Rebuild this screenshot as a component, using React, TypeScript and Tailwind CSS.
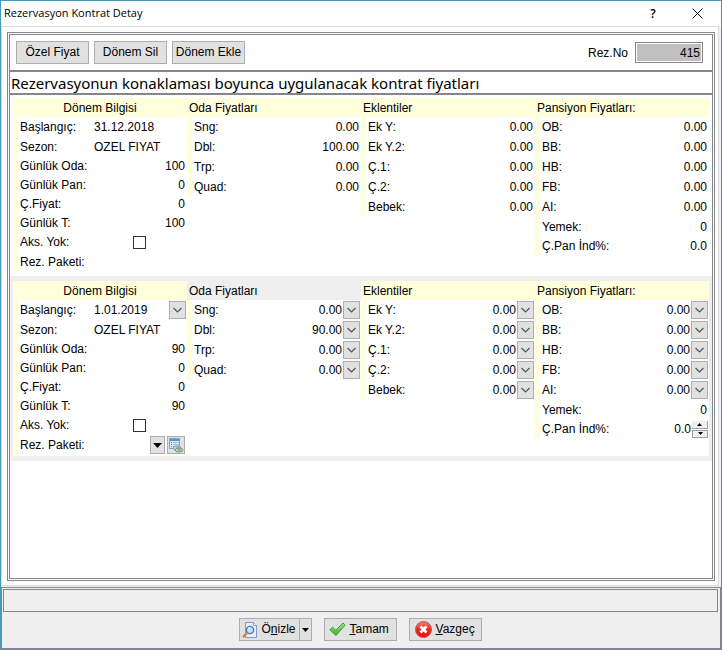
import React, { useId } from 'react';
import clsx from 'clsx';

type Control = 'drop' | 'spin';

interface PriceRow {
  label: string;
  value: string;
  control?: Control;
  short?: boolean;
}

interface Period {
  start: string;
  season: string;
  dailyRoom: string;
  dailyBoard: string;
  childPrice: string;
  dailyTotal: string;
  rooms: PriceRow[];
  extras: PriceRow[];
  boards: PriceRow[];
  active: boolean;
}

const rows = (labels: string[], value: string, control?: Control): PriceRow[] =>
  labels.map((label) => ({ label, value, control }));

const EXTRAS = ['Ek Y:', 'Ek Y.2:', 'Ç.1:', 'Ç.2:', 'Bebek:'];
const BOARDS = ['OB:', 'BB:', 'HB:', 'FB:', 'AI:'];

const periods: Period[] = [
  {
    start: '31.12.2018',
    season: 'OZEL FIYAT',
    dailyRoom: '100',
    dailyBoard: '0',
    childPrice: '0',
    dailyTotal: '100',
    rooms: [
      { label: 'Sng:', value: '0.00' },
      { label: 'Dbl:', value: '100.00' },
      { label: 'Trp:', value: '0.00' },
      { label: 'Quad:', value: '0.00' },
    ],
    extras: rows(EXTRAS, '0.00'),
    boards: [
      ...rows(BOARDS, '0.00'),
      { label: 'Yemek:', value: '0' },
      { label: 'Ç.Pan İnd%:', value: '0.0', short: true },
    ],
    active: false,
  },
  {
    start: '1.01.2019',
    season: 'OZEL FIYAT',
    dailyRoom: '90',
    dailyBoard: '0',
    childPrice: '0',
    dailyTotal: '90',
    rooms: [
      { label: 'Sng:', value: '0.00', control: 'drop' },
      { label: 'Dbl:', value: '90.00', control: 'drop' },
      { label: 'Trp:', value: '0.00', control: 'drop' },
      { label: 'Quad:', value: '0.00', control: 'drop' },
    ],
    extras: rows(EXTRAS, '0.00', 'drop'),
    boards: [
      ...rows(BOARDS, '0.00', 'drop'),
      { label: 'Yemek:', value: '0' },
      { label: 'Ç.Pan İnd%:', value: '0.0', control: 'spin', short: true },
    ],
    active: true,
  },
];

const DropButton = ({ label }: { label: string }) => (
  <button
    type="button"
    aria-label={label}
    className="flex h-[18px] w-[17px] shrink-0 items-center justify-center border border-[#adadad] bg-[#e1e1e1]"
  >
    <svg width="9" height="6" viewBox="0 0 9 6" fill="none" stroke="#555" strokeWidth="1.2">
      <path d="M0.5 1 L4.5 5 L8.5 1" />
    </svg>
  </button>
);

const Spinner = ({ label }: { label: string }) => (
  <div className="flex w-4 shrink-0 flex-col">
    <button
      type="button"
      aria-label={`${label} +`}
      className="flex h-2 items-center justify-center border-r border-b border-[#a0a0a0] bg-[#f0f0f0]"
    >
      <svg width="5" height="3" viewBox="0 0 5 3"><path d="M0 3 L2.5 0 L5 3Z" /></svg>
    </button>
    <button
      type="button"
      aria-label={`${label} -`}
      className="mt-px flex h-2 items-center justify-center border border-[#a0a0a0] bg-[#f0f0f0]"
    >
      <svg width="5" height="3" viewBox="0 0 5 3"><path d="M0 0 L2.5 3 L5 0Z" /></svg>
    </button>
  </div>
);

const PriceField = ({ row }: { row: PriceRow }) => {
  const id = useId();
  return (
    <div className={clsx('flex items-center pl-0.5', row.short ? 'h-[19px] pb-px' : 'h-5', row.control ? 'pr-px' : 'pr-0.5')}>
      <label htmlFor={id} className="shrink-0">{row.label}</label>
      <input
        id={id}
        defaultValue={row.value}
        readOnly={!row.control}
        className={clsx('w-0 min-w-0 flex-1 bg-transparent text-right outline-none', row.control && 'pr-px')}
      />
      {row.control === 'drop' && <DropButton label={row.label} />}
      {row.control === 'spin' && <Spinner label={row.label} />}
    </div>
  );
};

const PriceColumn = ({ title, items, plain }: { title: string; items: PriceRow[]; plain?: boolean }) => (
  <div className="flex min-w-0 flex-col">
    <h2 className={clsx('h-[19px] pt-0.5 pl-0.5', !plain && 'bg-[#ffffdc]')}>{title}</h2>
    <div className="flex-1 bg-white">
      <div className="border-l-[5px] border-[#ffffdc]">
        {items.map((row) => <PriceField key={row.label} row={row} />)}
      </div>
    </div>
  </div>
);

interface InfoRowProps {
  label: string;
  value?: string;
  tall?: boolean;
  left?: boolean;
  children?: React.ReactNode;
}

const InfoRow = ({ label, value, tall, left, children }: InfoRowProps) => {
  const id = useId();
  return (
    <div className={clsx('flex items-center pl-0.5', tall ? 'h-5' : 'h-[19px] pb-px', children ? 'pr-px' : 'pr-0.5')}>
      <label htmlFor={id} className="w-[74px] shrink-0 whitespace-nowrap">{label}</label>
      <input
        id={id}
        defaultValue={value}
        className={clsx('w-0 min-w-0 flex-1 bg-transparent outline-none', !left && 'text-right')}
      />
      {children}
    </div>
  );
};

const PackageIcon = () => (
  <svg width="16" height="16" viewBox="0 0 16 16">
    <rect x="1.5" y="1.5" width="10" height="10" fill="#d6e8fa" stroke="#7ba6d8" />
    <rect x="2" y="2" width="9" height="2" fill="#5b93d6" />
    <path d="M5 5.5h6M5 7.5h6M5 9.5h6" stroke="#9cc0ea" />
    <path d="M3 5.5h1M3 7.5h1M3 9.5h1" stroke="#4f86c8" />
    <ellipse cx="9" cy="11" rx="4" ry="2" fill="#d5dbd5" stroke="#8a928c" />
    <ellipse cx="11" cy="13" rx="4" ry="2" fill="#c4d0c4" stroke="#838c85" />
    <path d="M8 11h3M10 13h3" stroke="#5fa36a" />
  </svg>
);

const PeriodInfo = ({ period }: { period: Period }) => {
  const id = useId();
  return (
    <div className="flex min-w-0 flex-col">
      <h2 className="h-[19px] bg-[#ffffdc] pt-0.5 text-center">Dönem Bilgisi</h2>
      <div className="flex-1 bg-white">
        <div className="border-l-[5px] border-[#ffffdc]">
          <InfoRow label="Başlangıç:" value={period.start} tall left>
            {period.active && <DropButton label="Başlangıç" />}
          </InfoRow>
          <InfoRow label="Sezon:" value={period.season} tall left />
          <InfoRow label="Günlük Oda:" value={period.dailyRoom} />
          <InfoRow label="Günlük Pan:" value={period.dailyBoard} />
          <InfoRow label="Ç.Fiyat:" value={period.childPrice} />
          <InfoRow label="Günlük T:" value={period.dailyTotal} />
          <div className="flex h-[19px] items-center pb-px pl-0.5">
            <label htmlFor={id} className="w-[113px]">Aks. Yok:</label>
            <input
              id={id}
              type="checkbox"
              className="size-[13px] appearance-none border border-[#333] bg-white checked:bg-[#333]"
            />
          </div>
          <InfoRow label="Rez. Paketi:" tall>
            {period.active && (
              <div className="flex shrink-0 gap-0.5 pr-px">
                <button
                  type="button"
                  aria-label="Rez. Paketi seç"
                  className="flex h-[18px] w-[15px] items-center justify-center border border-[#adadad] bg-[#e1e1e1]"
                >
                  <svg width="9" height="5" viewBox="0 0 9 5"><path d="M0 0h9L4.5 5Z" /></svg>
                </button>
                <button
                  type="button"
                  aria-label="Rez. Paketi detay"
                  className="flex size-[18px] items-center justify-center border border-[#adadad] bg-[#e1e1e1]"
                >
                  <PackageIcon />
                </button>
              </div>
            )}
          </InfoRow>
        </div>
      </div>
    </div>
  );
};

const PeriodRecord = ({ period }: { period: Period }) => (
  <section
    className={clsx(
      'grid grid-cols-4 px-[3px]',
      period.active ? 'min-h-[185px] bg-[#efefef] py-[5px]' : 'bg-white pt-[3px] pb-1',
    )}
  >
    <PeriodInfo period={period} />
    <PriceColumn title="Oda Fiyatları" items={period.rooms} plain={period.active} />
    <PriceColumn title="Eklentiler" items={period.extras} />
    <PriceColumn title="Pansiyon Fiyatları:" items={period.boards} />
  </section>
);

const ToolButton = ({ children }: { children: React.ReactNode }) => (
  <button
    type="button"
    className="h-[23px] w-[73px] whitespace-nowrap border border-[#adadad] bg-[#e1e1e1] pb-0.5 text-center"
  >
    {children}
  </button>
);

const PreviewIcon = () => (
  <svg width="16" height="16" viewBox="0 0 16 16">
    <path d="M3.5 0.5h8l3 3v12h-11z" fill="#e4effc" stroke="#7c9cc9" />
    <path d="M11.5 0.5v3h3" fill="#fff" stroke="#7c9cc9" />
    <path d="M1 15.2 L5 11" stroke="#d98634" strokeWidth="2.4" />
    <circle cx="8" cy="8" r="3.6" fill="#c7dff8" stroke="#5573ad" strokeWidth="1.4" />
    <path d="M6 7.6a2.2 2.2 0 0 1 2-1.8" stroke="#fff" fill="none" />
  </svg>
);

const OkIcon = () => (
  <svg width="17" height="15" viewBox="0 0 17 15">
    <defs>
      <linearGradient id="ok" x1="0" y1="0" x2="0" y2="1">
        <stop offset="0" stopColor="#9be87c" />
        <stop offset="1" stopColor="#35b324" />
      </linearGradient>
    </defs>
    <path d="M0.8 7.8 L3.6 5.2 L6.8 8.2 L14 1 L16.2 3 L7 13.6Z" fill="url(#ok)" stroke="#4a9a42" strokeLinejoin="round" />
  </svg>
);

const CancelIcon = () => (
  <svg width="17" height="17" viewBox="0 0 17 17">
    <defs>
      <linearGradient id="cancel" x1="0" y1="0" x2="0" y2="1">
        <stop offset="0" stopColor="#f5817b" />
        <stop offset="0.5" stopColor="#e02a26" />
        <stop offset="1" stopColor="#e8130f" />
      </linearGradient>
    </defs>
    <circle cx="8.5" cy="8.5" r="8" fill="url(#cancel)" stroke="#d0504c" />
    <path d="M5.5 5.5l6 6M11.5 5.5l-6 6" stroke="#fff" strokeWidth="2.8" />
  </svg>
);

export default function App() {
  return (
    <div className="flex min-h-screen flex-col border border-[#4699b7] bg-[#efefef] font-['Liberation_Sans',sans-serif] text-xs text-black">
      <header className="flex h-[25px] shrink-0 items-center bg-white pr-4 pl-[3px] font-['Open_Sans',sans-serif]">
        <h1 className="flex-1 text-[11px]">Rezervasyon Kontrat Detay</h1>
        <button type="button" aria-label="Yardım" className="w-4 font-semibold">?</button>
        <button type="button" aria-label="Kapat" className="ml-7 flex w-4 justify-center">
          <svg width="11" height="11" viewBox="0 0 11 11" stroke="#000" fill="none">
            <path d="M0.5 0.5l10 10M10.5 0.5l-10 10" />
          </svg>
        </button>
      </header>

      <main className="mr-0.5 flex flex-1 flex-col border border-[#dcdcdc] bg-white pt-[5px] pr-[3px] pb-1 pl-[5px]">
        <div className="flex flex-1 flex-col border border-[#84868b] p-px">
          <div className="flex flex-1 flex-col border border-[#84868b]">
            <div className="flex h-[35px] items-center gap-[5px] pr-[9px] pl-1.5">
              <ToolButton>Özel Fiyat</ToolButton>
              <ToolButton>Dönem Sil</ToolButton>
              <ToolButton>Dönem Ekle</ToolButton>
              <label htmlFor="rezNo" className="ml-auto">Rez.No</label>
              <input
                id="rezNo"
                readOnly
                defaultValue="415"
                className="ml-0.5 h-[21px] w-[68px] border border-[#84868b] bg-[#c0c0c0] pr-0.5 text-right shadow-[inset_0_0_0_1px_white] outline-none"
              />
            </div>
            <div className="flex h-[25px] items-center border-t-2 border-b-2 border-[#84868b] pl-px font-['Noto_Sans',sans-serif] text-[15px] whitespace-nowrap">
              Rezervasyonun konaklaması boyunca uygulanacak kontrat fiyatları
            </div>
            {periods.map((period) => <PeriodRecord key={period.start} period={period} />)}
          </div>
        </div>
      </main>

      <footer className="mt-px border border-[#84868b] p-px">
        <div className="mr-px h-[23px] border border-[#84868b]" />
        <div className="flex items-center justify-center gap-3 py-1.5 pr-0.5">
          <div className="flex">
            <button type="button" className="flex h-[23px] w-[61px] items-center gap-1 border border-[#adadad] bg-[#e1e1e1] pl-0.5">
              <PreviewIcon />
              <span className="pb-px">Ö<u>n</u>izle</span>
            </button>
            <button
              type="button"
              aria-label="Önizle seçenekleri"
              className="flex h-[23px] w-3 items-center justify-center border border-l-0 border-[#adadad] bg-[#e1e1e1]"
            >
              <svg width="7" height="4" viewBox="0 0 7 4"><path d="M0 0h7L3.5 4Z" /></svg>
            </button>
          </div>
          <button type="button" className="flex h-[23px] w-[73px] items-center gap-1 border border-[#adadad] bg-[#e1e1e1] pl-1">
            <OkIcon />
            <span className="pb-px"><u>T</u>amam</span>
          </button>
          <button type="button" className="flex h-[23px] w-[73px] items-center gap-1 border border-[#adadad] bg-[#e1e1e1] pl-[5px]">
            <CancelIcon />
            <span className="pb-px"><u>V</u>azgeç</span>
          </button>
        </div>
      </footer>
    </div>
  );
}
